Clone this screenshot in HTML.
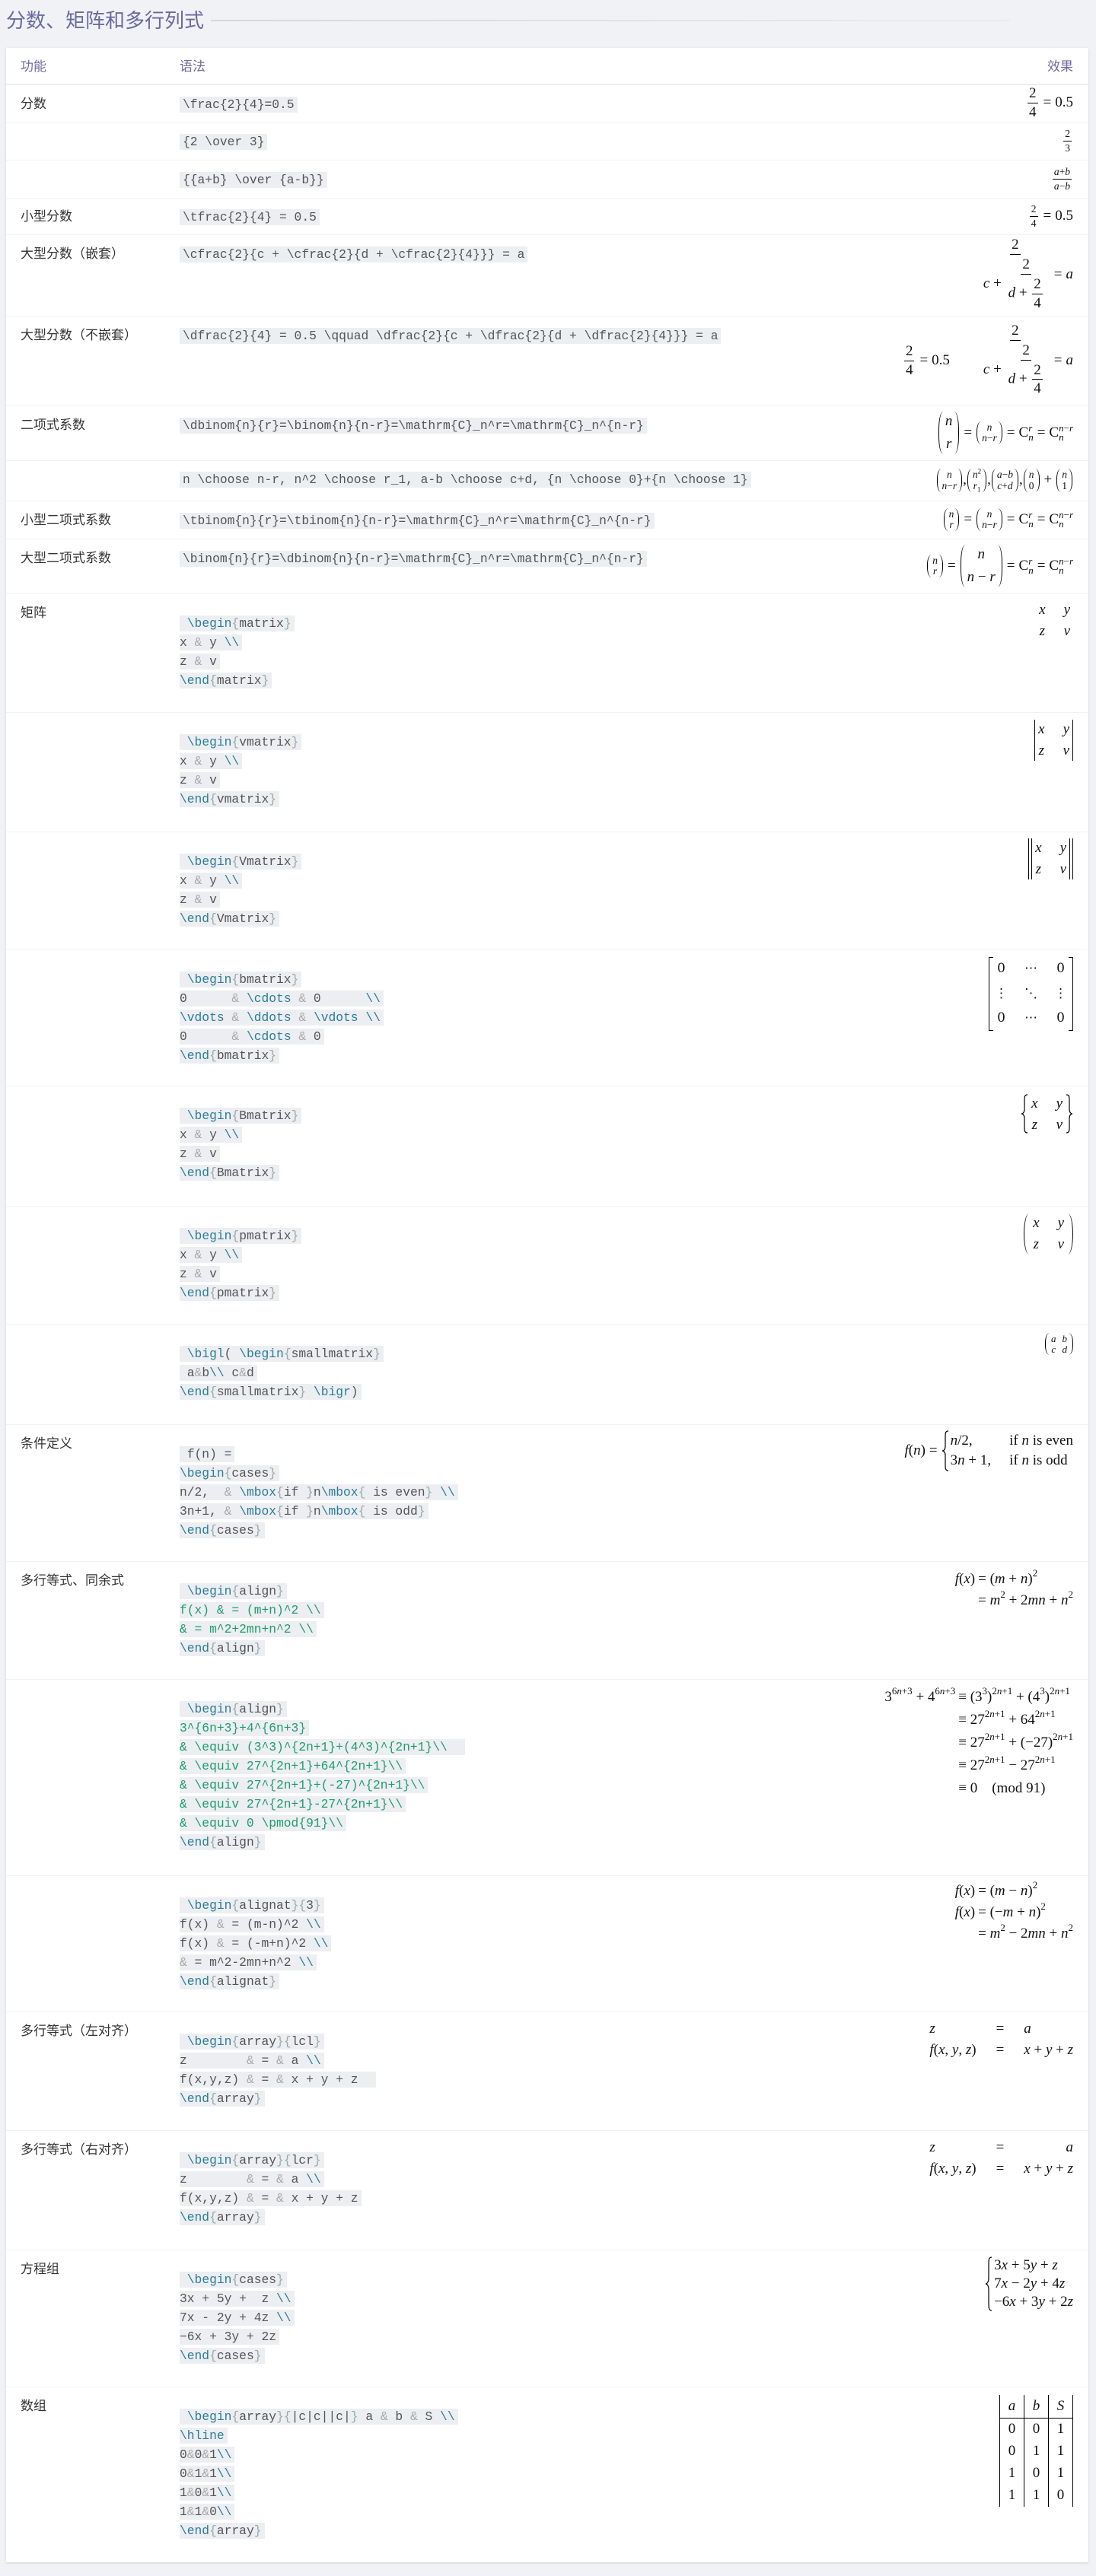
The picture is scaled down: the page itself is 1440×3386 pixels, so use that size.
<!DOCTYPE html>
<html><head><meta charset="utf-8">
<style>
body{margin:0;background:#f0f2f5;width:1440px;height:3386px;position:relative;font-family:"Liberation Sans","Noto Sans CJK SC",sans-serif;overflow:hidden}
.title{position:absolute;left:8px;top:8px;font-size:26px;color:#6b69a0;line-height:38px;font-family:"Liberation Sans","Noto Sans CJK SC",sans-serif}
.tline{position:absolute;left:277px;top:26px;width:1050px;height:2px;background:linear-gradient(to right,#d6d8df,#e9ebef)}
.card{position:absolute;left:8px;top:63px;width:1422px;height:3305px;background:#fff;box-shadow:0 1px 3px rgba(0,0,0,.15)}
.hd{position:absolute;top:77px;font-size:17px;color:#6f6d9b;line-height:22px}
.hline{position:absolute;left:8px;width:1422px;top:110px;height:2px;background:#eceef2}
.sep{position:absolute;left:8px;width:1422px;height:1px;background:#f1f2f4}
.lab{position:absolute;left:27px;font-size:17px;color:#333;line-height:22px}
.cd{position:absolute;left:236px;font-family:"Liberation Mono",monospace;font-size:16.3px;color:#555}
.cd div{height:25px}
.cd .l{display:inline-block;background:#eceef1;height:21px;line-height:21px;padding-right:4px;white-space:pre}
.cd .s{padding-left:4px}
.k{color:#2b7d99}.b{color:#9aa}.a{color:#aaa}.gr{color:#1f9d6c}
.m{position:absolute;right:30px;font-family:"Liberation Serif","DejaVu Serif",serif;font-size:19px;color:#111;white-space:nowrap;display:flex;align-items:center;line-height:1.2}
.m i{font-style:italic}
.f{display:inline-flex;flex-direction:column;align-items:center;vertical-align:middle;margin:0 2px}
.f>span{display:block;padding:1px 2px;line-height:1.15;text-align:center}
.f>span:first-child{border-bottom:1.2px solid #000}
.sm{font-size:13.5px}
.o{margin:0 5px}
.bn{display:inline-flex;align-items:stretch;vertical-align:middle;margin:0 1px}
.bn .c{display:flex;flex-direction:column;align-items:center;justify-content:space-between;padding:1px 1px;line-height:1.05}
.bn.big .c{padding:3px 3px;gap:10px}
.lp{width:5px;border-left:1.3px solid #000;border-radius:7px 0 0 7px/50% 0 0 50%}
.rp{width:5px;border-right:1.3px solid #000;border-radius:0 7px 7px 0/0 50% 50% 0}
.ss{display:inline-flex;flex-direction:column;font-size:13px;line-height:12px;vertical-align:middle}
.sp{font-size:13px;vertical-align:9px;line-height:0}
.mx{display:inline-flex;align-items:stretch}
.g{display:grid;grid-template-columns:auto auto;column-gap:24px;row-gap:4px;padding:1px 4px;justify-items:center;line-height:24px}
.vb{width:0;border-left:1.2px solid #000}
.lb{width:5px;border:1.3px solid #000;border-right:0}
.rb{width:5px;border:1.3px solid #000;border-left:0}
.al{display:grid;grid-template-columns:auto auto;row-gap:4px;line-height:24px;align-items:baseline}
.al>span:nth-child(odd){text-align:right}
.al>span:nth-child(even){text-align:left;padding-left:4px}
table.t{border-collapse:collapse;font-size:19px}
table.t td{border-left:1.2px solid #000;border-right:1.2px solid #000;width:31px;height:29px;text-align:center;padding:0}
table.t tr:first-child td{border-bottom:1.2px solid #000;height:30px}
</style></head><body>
<div class="title">分数、矩阵和多行列式</div>
<div class="tline"></div>
<div class="card"></div>
<div class="hd" style="left:27px">功能</div>
<div class="hd" style="left:236px">语法</div>
<div class="hd" style="right:30px">效果</div>
<div class="hline"></div>

<div class="sep" style="top:160px"></div><div class="sep" style="top:210px"></div><div class="sep" style="top:260px"></div><div class="sep" style="top:308px"></div><div class="sep" style="top:415px"></div><div class="sep" style="top:533px"></div><div class="sep" style="top:605px"></div><div class="sep" style="top:658px"></div><div class="sep" style="top:708px"></div><div class="sep" style="top:780px"></div><div class="sep" style="top:936px"></div><div class="sep" style="top:1093px"></div><div class="sep" style="top:1248px"></div><div class="sep" style="top:1427px"></div><div class="sep" style="top:1585px"></div><div class="sep" style="top:1740px"></div><div class="sep" style="top:1872px"></div><div class="sep" style="top:2052px"></div><div class="sep" style="top:2207px"></div><div class="sep" style="top:2465px"></div><div class="sep" style="top:2644px"></div><div class="sep" style="top:2800px"></div><div class="sep" style="top:2957px"></div><div class="sep" style="top:3137px"></div>

<!-- R1 -->
<div class="lab" style="top:126px">分数</div>
<div class="cd" style="top:127px"><span class="l s">\frac{2}{4}=0.5</span></div>
<div class="m" style="top:111px;height:49px"><span class="f"><span>2</span><span>4</span></span><span class="o">=</span>0.5</div>
<!-- R2 -->
<div class="cd" style="top:176px"><span class="l s">{2 \over 3}</span></div>
<div class="m" style="top:160px;height:50px"><span class="f sm"><span>2</span><span>3</span></span></div>
<!-- R3 -->
<div class="cd" style="top:226px"><span class="l s">{{a+b} \over {a-b}}</span></div>
<div class="m" style="top:210px;height:50px"><span class="f sm"><span><i>a</i>+<i>b</i></span><span><i>a</i>−<i>b</i></span></span></div>
<!-- R4 -->
<div class="lab" style="top:274px">小型分数</div>
<div class="cd" style="top:275px"><span class="l s">\tfrac{2}{4} = 0.5</span></div>
<div class="m" style="top:260px;height:48px"><span class="f sm"><span>2</span><span>4</span></span><span class="o">=</span>0.5</div>
<!-- R5 -->
<div class="lab" style="top:323px">大型分数（嵌套）</div>
<div class="cd" style="top:324px"><span class="l s">\cfrac{2}{c + \cfrac{2}{d + \cfrac{2}{4}}} = a</span></div>
<div class="m" style="top:308px;height:107px"><span class="f"><span>2</span><span><i>c</i> + <span class="f"><span>2</span><span><i>d</i> + <span class="f"><span>2</span><span>4</span></span></span></span></span></span><span class="o">=</span><i>a</i></div>
<!-- R6 -->
<div class="lab" style="top:430px">大型分数（不嵌套）</div>
<div class="cd" style="top:431px"><span class="l s">\dfrac{2}{4} = 0.5 \qquad \dfrac{2}{c + \dfrac{2}{d + \dfrac{2}{4}}} = a</span></div>
<div class="m" style="top:415px;height:118px"><span class="f"><span>2</span><span>4</span></span><span class="o">=</span>0.5<span style="display:inline-block;width:40px"></span><span class="f"><span>2</span><span><i>c</i> + <span class="f"><span>2</span><span><i>d</i> + <span class="f"><span>2</span><span>4</span></span></span></span></span></span><span class="o">=</span><i>a</i></div>
<!-- R7 -->
<div class="lab" style="top:548px">二项式系数</div>
<div class="cd" style="top:549px"><span class="l s">\dbinom{n}{r}=\binom{n}{n-r}=\mathrm{C}_n^r=\mathrm{C}_n^{n-r}</span></div>
<div class="m" style="top:533px;height:72px"><span class="bn big"><span class="lp"></span><span class="c"><i>n</i><i>r</i></span><span class="rp"></span></span><span class="o">=</span><span class="bn sm"><span class="lp"></span><span class="c"><i>n</i><span><i>n</i>−<i>r</i></span></span><span class="rp"></span></span><span class="o">=</span>C<span class="ss"><i>r</i><i>n</i></span><span class="o">=</span>C<span class="ss"><span><i>n</i>−<i>r</i></span><i>n</i></span></div>
<!-- R8 -->
<div class="cd" style="top:620px"><span class="l s">n \choose n-r, n^2 \choose r_1, a-b \choose c+d, {n \choose 0}+{n \choose 1}</span></div>
<div class="m" style="top:605px;height:53px"><span class="bn sm"><span class="lp"></span><span class="c"><i>n</i><span><i>n</i>−<i>r</i></span></span><span class="rp"></span></span>,<span class="bn sm"><span class="lp"></span><span class="c"><span><i>n</i><sup style="font-size:9px;line-height:0">2</sup></span><span><i>r</i><sub style="font-size:9px;line-height:0">1</sub></span></span><span class="rp"></span></span>,<span class="bn sm"><span class="lp"></span><span class="c"><span><i>a</i>−<i>b</i></span><span><i>c</i>+<i>d</i></span></span><span class="rp"></span></span>,<span class="bn sm"><span class="lp"></span><span class="c"><i>n</i><span>0</span></span><span class="rp"></span></span><span class="o">+</span><span class="bn sm"><span class="lp"></span><span class="c"><i>n</i><span>1</span></span><span class="rp"></span></span></div>
<!-- R9 -->
<div class="lab" style="top:673px">小型二项式系数</div>
<div class="cd" style="top:674px"><span class="l s">\tbinom{n}{r}=\tbinom{n}{n-r}=\mathrm{C}_n^r=\mathrm{C}_n^{n-r}</span></div>
<div class="m" style="top:658px;height:50px"><span class="bn sm"><span class="lp"></span><span class="c"><i>n</i><i>r</i></span><span class="rp"></span></span><span class="o">=</span><span class="bn sm"><span class="lp"></span><span class="c"><i>n</i><span><i>n</i>−<i>r</i></span></span><span class="rp"></span></span><span class="o">=</span>C<span class="ss"><i>r</i><i>n</i></span><span class="o">=</span>C<span class="ss"><span><i>n</i>−<i>r</i></span><i>n</i></span></div>
<!-- R10 -->
<div class="lab" style="top:723px">大型二项式系数</div>
<div class="cd" style="top:724px"><span class="l s">\binom{n}{r}=\dbinom{n}{n-r}=\mathrm{C}_n^r=\mathrm{C}_n^{n-r}</span></div>
<div class="m" style="top:708px;height:72px"><span class="bn sm"><span class="lp"></span><span class="c"><i>n</i><i>r</i></span><span class="rp"></span></span><span class="o">=</span><span class="bn big"><span class="lp"></span><span class="c"><i>n</i><span><i>n</i> − <i>r</i></span></span><span class="rp"></span></span><span class="o">=</span>C<span class="ss"><i>r</i><i>n</i></span><span class="o">=</span>C<span class="ss"><span><i>n</i>−<i>r</i></span><i>n</i></span></div>

<!-- R11 matrix -->
<div class="lab" style="top:795px">矩阵</div>
<div class="cd" style="top:809px"><div><span class="l"> <span class="k">\begin</span><span class="b">{</span>matrix<span class="b">}</span></span></div><div><span class="l">x <span class="a">&amp;</span> y <span class="k">\\</span></span></div><div><span class="l">z <span class="a">&amp;</span> v</span></div><div><span class="l"><span class="k">\end</span><span class="b">{</span>matrix<span class="b">}</span></span></div></div>
<div class="m" style="top:789px"><span class="mx"><span class="g"><i>x</i><i>y</i><i>z</i><i>v</i></span></span></div>
<!-- R12 vmatrix -->
<div class="cd" style="top:965px"><div><span class="l"> <span class="k">\begin</span><span class="b">{</span>vmatrix<span class="b">}</span></span></div><div><span class="l">x <span class="a">&amp;</span> y <span class="k">\\</span></span></div><div><span class="l">z <span class="a">&amp;</span> v</span></div><div><span class="l"><span class="k">\end</span><span class="b">{</span>vmatrix<span class="b">}</span></span></div></div>
<div class="m" style="top:946px"><span class="mx"><span class="vb"></span><span class="g"><i>x</i><i>y</i><i>z</i><i>v</i></span><span class="vb"></span></span></div>
<!-- R13 Vmatrix -->
<div class="cd" style="top:1122px"><div><span class="l"> <span class="k">\begin</span><span class="b">{</span>Vmatrix<span class="b">}</span></span></div><div><span class="l">x <span class="a">&amp;</span> y <span class="k">\\</span></span></div><div><span class="l">z <span class="a">&amp;</span> v</span></div><div><span class="l"><span class="k">\end</span><span class="b">{</span>Vmatrix<span class="b">}</span></span></div></div>
<div class="m" style="top:1102px"><span class="mx"><span class="vb"></span><span class="vb" style="margin-left:3px"></span><span class="g"><i>x</i><i>y</i><i>z</i><i>v</i></span><span class="vb"></span><span class="vb" style="margin-left:3px"></span></span></div>
<!-- R14 bmatrix -->
<div class="cd" style="top:1277px"><div><span class="l"> <span class="k">\begin</span><span class="b">{</span>bmatrix<span class="b">}</span></span></div><div><span class="l">0      <span class="a">&amp;</span> <span class="k">\cdots</span> <span class="a">&amp;</span> 0      <span class="k">\\</span></span></div><div><span class="l"><span class="k">\vdots</span> <span class="a">&amp;</span> <span class="k">\ddots</span> <span class="a">&amp;</span> <span class="k">\vdots</span> <span class="k">\\</span></span></div><div><span class="l">0      <span class="a">&amp;</span> <span class="k">\cdots</span> <span class="a">&amp;</span> 0</span></div><div><span class="l"><span class="k">\end</span><span class="b">{</span>bmatrix<span class="b">}</span></span></div></div>
<div class="m" style="top:1258px"><span class="mx" style="height:97px"><span class="lb"></span><span class="g" style="grid-template-columns:auto auto auto;column-gap:22px;line-height:28px;row-gap:3px;font-family:'DejaVu Serif','Liberation Serif',serif;font-size:17px;padding:1px 2px"><span>0</span><span>⋯</span><span>0</span><span>⋮</span><span>⋱</span><span>⋮</span><span>0</span><span>⋯</span><span>0</span></span><span class="rb"></span></span></div>
<!-- R15 Bmatrix -->
<div class="cd" style="top:1456px"><div><span class="l"> <span class="k">\begin</span><span class="b">{</span>Bmatrix<span class="b">}</span></span></div><div><span class="l">x <span class="a">&amp;</span> y <span class="k">\\</span></span></div><div><span class="l">z <span class="a">&amp;</span> v</span></div><div><span class="l"><span class="k">\end</span><span class="b">{</span>Bmatrix<span class="b">}</span></span></div></div>
<div class="m" style="top:1438px"><span class="mx"><svg width="10" height="52" viewBox="0 0 10 52" preserveAspectRatio="none"><path d="M9 1C5 1 5 4 5 9V20C5 24 3 26 1 26C3 26 5 28 5 32V43C5 48 5 51 9 51" fill="none" stroke="#000" stroke-width="1.2"/></svg><span class="g"><i>x</i><i>y</i><i>z</i><i>v</i></span><svg width="10" height="52" viewBox="0 0 10 52" preserveAspectRatio="none"><path d="M1 1C5 1 5 4 5 9V20C5 24 7 26 9 26C7 26 5 28 5 32V43C5 48 5 51 1 51" fill="none" stroke="#000" stroke-width="1.2"/></svg></span></div>
<!-- R16 pmatrix -->
<div class="cd" style="top:1614px"><div><span class="l"> <span class="k">\begin</span><span class="b">{</span>pmatrix<span class="b">}</span></span></div><div><span class="l">x <span class="a">&amp;</span> y <span class="k">\\</span></span></div><div><span class="l">z <span class="a">&amp;</span> v</span></div><div><span class="l"><span class="k">\end</span><span class="b">{</span>pmatrix<span class="b">}</span></span></div></div>
<div class="m" style="top:1595px"><span class="mx"><span class="lp" style="width:7px"></span><span class="g"><i>x</i><i>y</i><i>z</i><i>v</i></span><span class="rp" style="width:7px"></span></span></div>
<!-- R17 smallmatrix -->
<div class="cd" style="top:1769px"><div><span class="l"> <span class="k">\bigl</span>( <span class="k">\begin</span><span class="b">{</span>smallmatrix<span class="b">}</span></span></div><div><span class="l"> a<span class="a">&amp;</span>b<span class="k">\\</span> c<span class="a">&amp;</span>d</span></div><div><span class="l"><span class="k">\end</span><span class="b">{</span>smallmatrix<span class="b">}</span> <span class="k">\bigr</span>)</span></div></div>
<div class="m" style="top:1752px"><span class="mx" style="font-size:13px"><span class="lp"></span><span class="g" style="column-gap:8px;line-height:13px;row-gap:1px;padding:1px 2px"><i>a</i><i>b</i><i>c</i><i>d</i></span><span class="rp"></span></span></div>

<!-- R18 cases -->
<div class="lab" style="top:1887px">条件定义</div>
<div class="cd" style="top:1901px"><div><span class="l"> f(n) =</span></div><div><span class="l"><span class="k">\begin</span><span class="b">{</span>cases<span class="b">}</span></span></div><div><span class="l">n/2,  <span class="a">&amp;</span> <span class="k">\mbox</span><span class="b">{</span>if <span class="b">}</span>n<span class="k">\mbox</span><span class="b">{</span> is even<span class="b">}</span> <span class="k">\\</span></span></div><div><span class="l">3n+1, <span class="a">&amp;</span> <span class="k">\mbox</span><span class="b">{</span>if <span class="b">}</span>n<span class="k">\mbox</span><span class="b">{</span> is odd<span class="b">}</span></span></div><div><span class="l"><span class="k">\end</span><span class="b">{</span>cases<span class="b">}</span></span></div></div>
<div class="m" style="top:1880px"><i>f</i>(<i>n</i>)<span class="o">=</span><svg width="10" height="54" viewBox="0 0 10 54" preserveAspectRatio="none"><path d="M9 1C5 1 5 4 5 9V21C5 25 3 27 1 27C3 27 5 29 5 33V45C5 50 5 53 9 53" fill="none" stroke="#000" stroke-width="1.2"/></svg><span style="display:grid;grid-template-columns:auto auto;column-gap:24px;line-height:26px;margin-left:2px"><span><i>n</i>/2,</span><span>if <i>n</i> is even</span><span>3<i>n</i> + 1,</span><span>if <i>n</i> is odd</span></span></div>

<!-- R19 align -->
<div class="lab" style="top:2067px">多行等式、同余式</div>
<div class="cd" style="top:2081px"><div><span class="l"> <span class="k">\begin</span><span class="b">{</span>align<span class="b">}</span></span></div><div><span class="l gr">f(x) &amp; = (m+n)^2 \\</span></div><div><span class="l gr">&amp; = m^2+2mn+n^2 \\</span></div><div><span class="l"><span class="k">\end</span><span class="b">{</span>align<span class="b">}</span></span></div></div>
<div class="m" style="top:2064px"><span class="al"><span><i>f</i>(<i>x</i>)</span><span>= (<i>m</i> + <i>n</i>)<span class="sp">2</span></span><span></span><span>= <i>m</i><span class="sp">2</span> + 2<i>mn</i> + <i>n</i><span class="sp">2</span></span></span></div>

<!-- R20 align2 -->
<div class="cd" style="top:2236px"><div><span class="l"> <span class="k">\begin</span><span class="b">{</span>align<span class="b">}</span></span></div><div><span class="l gr">3^{6n+3}+4^{6n+3}</span></div><div><span class="l gr">&amp; \equiv (3^3)^{2n+1}+(4^3)^{2n+1}\\  </span></div><div><span class="l gr">&amp; \equiv 27^{2n+1}+64^{2n+1}\\</span></div><div><span class="l gr">&amp; \equiv 27^{2n+1}+(-27)^{2n+1}\\</span></div><div><span class="l gr">&amp; \equiv 27^{2n+1}-27^{2n+1}\\</span></div><div><span class="l gr">&amp; \equiv 0 \pmod{91}\\</span></div><div><span class="l"><span class="k">\end</span><span class="b">{</span>align<span class="b">}</span></span></div></div>
<div class="m" style="top:2218px"><span class="al" style="line-height:25px;row-gap:5px"><span>3<span class="sp">6<i>n</i>+3</span> + 4<span class="sp">6<i>n</i>+3</span></span><span>≡ (3<span class="sp">3</span>)<span class="sp">2<i>n</i>+1</span> + (4<span class="sp">3</span>)<span class="sp">2<i>n</i>+1</span></span><span></span><span>≡ 27<span class="sp">2<i>n</i>+1</span> + 64<span class="sp">2<i>n</i>+1</span></span><span></span><span>≡ 27<span class="sp">2<i>n</i>+1</span> + (−27)<span class="sp">2<i>n</i>+1</span></span><span></span><span>≡ 27<span class="sp">2<i>n</i>+1</span> − 27<span class="sp">2<i>n</i>+1</span></span><span></span><span>≡ 0 &nbsp;&nbsp; (mod 91)</span></span></div>

<!-- R21 alignat -->
<div class="cd" style="top:2494px"><div><span class="l"> <span class="k">\begin</span><span class="b">{</span>alignat<span class="b">}{</span>3<span class="b">}</span></span></div><div><span class="l">f(x) <span class="a">&amp;</span> = (m-n)^2 <span class="k">\\</span></span></div><div><span class="l">f(x) <span class="a">&amp;</span> = (-m+n)^2 <span class="k">\\</span></span></div><div><span class="l"><span class="a">&amp;</span> = m^2-2mn+n^2 <span class="k">\\</span></span></div><div><span class="l"><span class="k">\end</span><span class="b">{</span>alignat<span class="b">}</span></span></div></div>
<div class="m" style="top:2474px"><span class="al"><span><i>f</i>(<i>x</i>)</span><span>= (<i>m</i> − <i>n</i>)<span class="sp">2</span></span><span><i>f</i>(<i>x</i>)</span><span>= (−<i>m</i> + <i>n</i>)<span class="sp">2</span></span><span></span><span>= <i>m</i><span class="sp">2</span> − 2<i>mn</i> + <i>n</i><span class="sp">2</span></span></span></div>

<!-- R22 lcl -->
<div class="lab" style="top:2659px">多行等式（左对齐）</div>
<div class="cd" style="top:2673px"><div><span class="l"> <span class="k">\begin</span><span class="b">{</span>array<span class="b">}{</span>lcl<span class="b">}</span></span></div><div><span class="l">z        <span class="a">&amp;</span> = <span class="a">&amp;</span> a <span class="k">\\</span></span></div><div><span class="l">f(x,y,z) <span class="a">&amp;</span> = <span class="a">&amp;</span> x + y + z  </span></div><div><span class="l"><span class="k">\end</span><span class="b">{</span>array<span class="b">}</span></span></div></div>
<div class="m" style="top:2653px"><span style="display:grid;grid-template-columns:auto auto auto;column-gap:26px;line-height:28px"><span><i>z</i></span><span>=</span><span><i>a</i></span><span><i>f</i>(<i>x</i>, <i>y</i>, <i>z</i>)</span><span>=</span><span><i>x</i> + <i>y</i> + <i>z</i></span></span></div>
<!-- R23 lcr -->
<div class="lab" style="top:2815px">多行等式（右对齐）</div>
<div class="cd" style="top:2829px"><div><span class="l"> <span class="k">\begin</span><span class="b">{</span>array<span class="b">}{</span>lcr<span class="b">}</span></span></div><div><span class="l">z        <span class="a">&amp;</span> = <span class="a">&amp;</span> a <span class="k">\\</span></span></div><div><span class="l">f(x,y,z) <span class="a">&amp;</span> = <span class="a">&amp;</span> x + y + z</span></div><div><span class="l"><span class="k">\end</span><span class="b">{</span>array<span class="b">}</span></span></div></div>
<div class="m" style="top:2809px"><span style="display:grid;grid-template-columns:auto auto auto;column-gap:26px;line-height:28px"><span><i>z</i></span><span>=</span><span style="text-align:right"><i>a</i></span><span><i>f</i>(<i>x</i>, <i>y</i>, <i>z</i>)</span><span>=</span><span><i>x</i> + <i>y</i> + <i>z</i></span></span></div>

<!-- R24 方程组 -->
<div class="lab" style="top:2972px">方程组</div>
<div class="cd" style="top:2986px"><div><span class="l"> <span class="k">\begin</span><span class="b">{</span>cases<span class="b">}</span></span></div><div><span class="l">3x + 5y +  z <span class="k">\\</span></span></div><div><span class="l">7x - 2y + 4z <span class="k">\\</span></span></div><div><span class="l">−6x + 3y + 2z</span></div><div><span class="l"><span class="k">\end</span><span class="b">{</span>cases<span class="b">}</span></span></div></div>
<div class="m" style="top:2966px"><svg width="10" height="72" viewBox="0 0 10 72" preserveAspectRatio="none"><path d="M9 1C5 1 5 5 5 11V29C5 33 3 36 1 36C3 36 5 39 5 43V61C5 67 5 71 9 71" fill="none" stroke="#000" stroke-width="1.2"/></svg><span style="display:flex;flex-direction:column;line-height:24px;margin-left:2px"><span>3<i>x</i> + 5<i>y</i> + <i>z</i></span><span>7<i>x</i> − 2<i>y</i> + 4<i>z</i></span><span>−6<i>x</i> + 3<i>y</i> + 2<i>z</i></span></span></div>

<!-- R25 数组 -->
<div class="lab" style="top:3152px">数组</div>
<div class="cd" style="top:3166px"><div><span class="l"> <span class="k">\begin</span><span class="b">{</span>array<span class="b">}{</span>|c|c||c|<span class="b">}</span> a <span class="a">&amp;</span> b <span class="a">&amp;</span> S <span class="k">\\</span></span></div><div><span class="l"><span class="k">\hline</span></span></div><div><span class="l">0<span class="a">&amp;</span>0<span class="a">&amp;</span>1<span class="k">\\</span></span></div><div><span class="l">0<span class="a">&amp;</span>1<span class="a">&amp;</span>1<span class="k">\\</span></span></div><div><span class="l">1<span class="a">&amp;</span>0<span class="a">&amp;</span>1<span class="k">\\</span></span></div><div><span class="l">1<span class="a">&amp;</span>1<span class="a">&amp;</span>0<span class="k">\\</span></span></div><div><span class="l"><span class="k">\end</span><span class="b">{</span>array<span class="b">}</span></span></div></div>
<div class="m" style="top:3148px"><table class="t"><tr><td><i>a</i></td><td><i>b</i></td><td><i>S</i></td></tr><tr><td>0</td><td>0</td><td>1</td></tr><tr><td>0</td><td>1</td><td>1</td></tr><tr><td>1</td><td>0</td><td>1</td></tr><tr><td>1</td><td>1</td><td>0</td></tr></table></div>
</body></html>
